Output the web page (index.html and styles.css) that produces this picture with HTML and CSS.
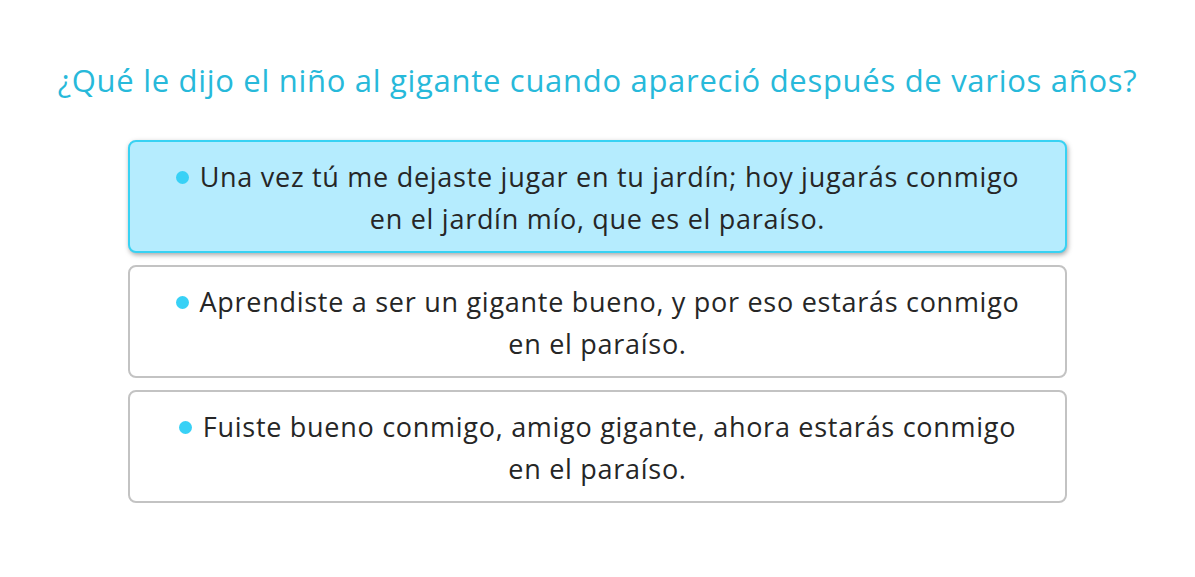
FILE: index.html
```html
<!DOCTYPE html>
<html lang="es">
<head>
<meta charset="utf-8">
<link rel="stylesheet" href="styles.css">
</head>
<body>
<main class="quiz">
  <h1 class="question">¿Qué le dijo el niño al gigante cuando apareció después de varios años?</h1>
  <div class="options">
    <div class="option selected"><span class="dot"></span>Una vez tú me dejaste jugar en tu jardín; hoy jugarás conmigo<br>en el jardín mío, que es el paraíso.</div>
    <div class="option"><span class="dot"></span>Aprendiste a ser un gigante bueno, y por eso estarás conmigo<br>en el paraíso.</div>
    <div class="option"><span class="dot"></span>Fuiste bueno conmigo, amigo gigante, ahora estarás conmigo<br>en el paraíso.</div>
  </div>
</main>
</body>
</html>
```
FILE: styles.css
```css
html, body {
  margin: 0;
  padding: 0;
  background: #ffffff;
}
body {
  font-family: "Open Sans", "Noto Sans", sans-serif;
}
.quiz {
  width: 1195px;
  padding-top: 56px;
  display: flex;
  flex-direction: column;
  align-items: center;
}
.question {
  margin: 0;
  font-weight: 400;
  font-size: 31px;
  line-height: 48px;
  color: #27b9da;
  text-align: center;
  letter-spacing: 0.7px;
  white-space: nowrap;
}
.options {
  margin-top: 36px;
  width: 939px;
  display: flex;
  flex-direction: column;
  gap: 12px;
}
.option {
  border: 2px solid #c3c3c3;
  border-radius: 8px;
  background: #ffffff;
  padding: 14px 10px 11px;
  text-align: center;
  font-size: 27px;
  line-height: 42px;
  color: #262626;
  letter-spacing: 0.72px;
}
.option.selected {
  background: #b5ecfe;
  border-color: #38d2f3;
  box-shadow: 1px 2px 5px rgba(0, 0, 0, 0.35);
}
.dot {
  display: inline-block;
  width: 13px;
  height: 13px;
  border-radius: 50%;
  background: #38d1f6;
  margin-right: 11px;
  vertical-align: 3px;
}
```
